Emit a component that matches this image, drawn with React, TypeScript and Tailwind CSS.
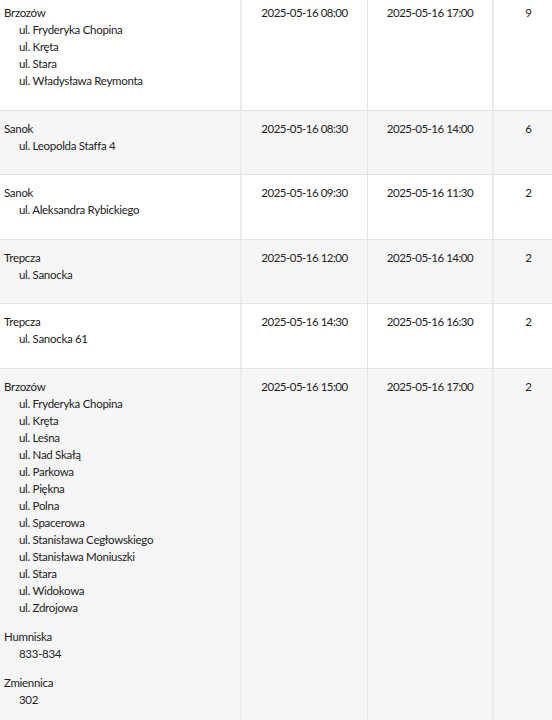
import React from "react";

type Group = { city: string; items: string[] };
type Row = { groups: Group[]; start: string; end: string; count: string };

const rows: Row[] = [
  {
    groups: [
      {
        city: "Brzozów",
        items: ["ul. Fryderyka Chopina", "ul. Kręta", "ul. Stara", "ul. Władysława Reymonta"],
      },
    ],
    start: "2025-05-16 08:00",
    end: "2025-05-16 17:00",
    count: "9",
  },
  {
    groups: [{ city: "Sanok", items: ["ul. Leopolda Staffa 4"] }],
    start: "2025-05-16 08:30",
    end: "2025-05-16 14:00",
    count: "6",
  },
  {
    groups: [{ city: "Sanok", items: ["ul. Aleksandra Rybickiego"] }],
    start: "2025-05-16 09:30",
    end: "2025-05-16 11:30",
    count: "2",
  },
  {
    groups: [{ city: "Trepcza", items: ["ul. Sanocka"] }],
    start: "2025-05-16 12:00",
    end: "2025-05-16 14:00",
    count: "2",
  },
  {
    groups: [{ city: "Trepcza", items: ["ul. Sanocka 61"] }],
    start: "2025-05-16 14:30",
    end: "2025-05-16 16:30",
    count: "2",
  },
  {
    groups: [
      {
        city: "Brzozów",
        items: [
          "ul. Fryderyka Chopina",
          "ul. Kręta",
          "ul. Leśna",
          "ul. Nad Skałą",
          "ul. Parkowa",
          "ul. Piękna",
          "ul. Polna",
          "ul. Spacerowa",
          "ul. Stanisława Cegłowskiego",
          "ul. Stanisława Moniuszki",
          "ul. Stara",
          "ul. Widokowa",
          "ul. Zdrojowa",
        ],
      },
      { city: "Humniska", items: ["833-834"] },
      { city: "Zmiennica", items: ["302"] },
    ],
    start: "2025-05-16 15:00",
    end: "2025-05-16 17:00",
    count: "2",
  },
];

export default function App() {
  return (
    <div
      className="w-[552px] h-[720px] overflow-hidden bg-white text-[#222222]"
      style={{ fontFamily: "Lato, 'Liberation Sans', sans-serif" }}
    >
      <div className="-mt-[5px] flex flex-col text-[11.5px] leading-[17px]">
        {rows.map((r, i) => (
          <div
            key={i}
            className={`flex border-b border-[#e4e4e4] ${i % 2 === 1 ? "bg-[#f6f6f6]" : "bg-white"}`}
          >
            <div className="w-[242px] shrink-0 border-r-2 border-[#ececec] pl-[4px] pt-[9px] pb-[8.5px] tracking-[-0.3px]">
              {r.groups.map((g, j) => (
                <div key={j} className="mb-[12px]">
                  <div>{g.city}</div>
                  {g.items.map((it, k) => (
                    <div key={k} className="pl-[15px]">
                      {it}
                    </div>
                  ))}
                </div>
              ))}
            </div>
            <div className="w-[126px] shrink-0 border-r border-[#e4e4e4] pt-[9px] text-center tracking-[-0.5px]">
              {r.start}
            </div>
            <div className="w-[126px] shrink-0 border-r-2 border-[#ececec] pt-[9px] text-center tracking-[-0.5px]">
              {r.end}
            </div>
            <div className="flex-1 pt-[9px] pr-[20px] text-right">{r.count}</div>
          </div>
        ))}
      </div>
    </div>
  );
}
